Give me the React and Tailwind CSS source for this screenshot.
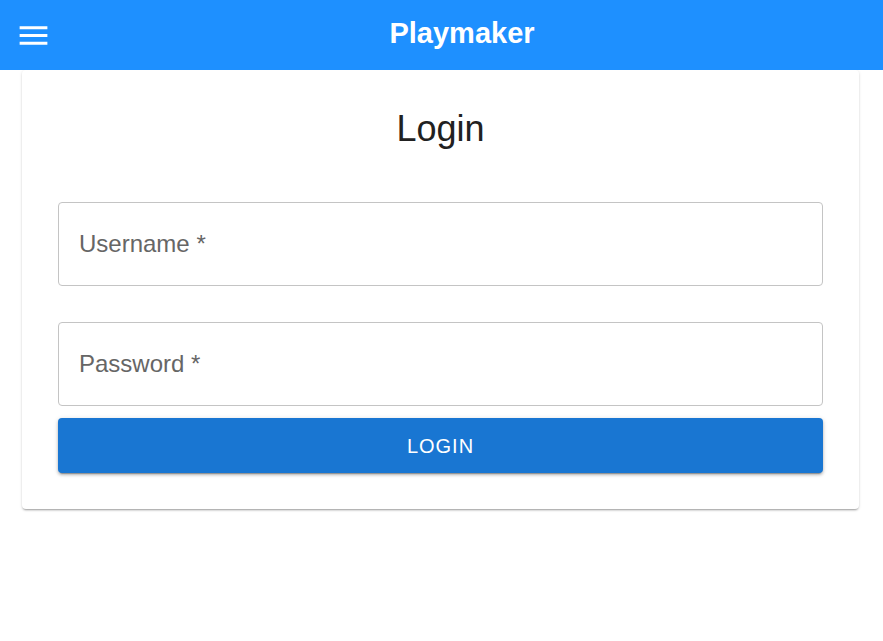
import React from "react";

const MenuIcon = () => (
  <svg viewBox="0 0 24 24" className="w-[37px] h-[37px] fill-white">
    <path d="M3 18h18v-2H3zm0-5h18v-2H3zm0-7v2h18V6z" />
  </svg>
);

export default function App() {
  return (
    <div className="min-h-screen bg-white font-['Liberation_Sans',Arial,sans-serif]">
      {/* App bar */}
      <header className="relative z-10 h-[70px] bg-[#1e90ff] flex items-center px-[15px]">
        <button className="flex items-center justify-center">
          <MenuIcon />
        </button>
        <h1 className="flex-1 text-center pl-[4px] -mt-[4px] text-[29px] font-bold text-white leading-none">
          Playmaker
        </h1>
      </header>

      {/* Login card */}
      <div className="ml-[22px] w-[837px] bg-white rounded-[4px] shadow-[0_2px_2px_-1px_rgba(0,0,0,0.3),0_1px_3px_0_rgba(0,0,0,0.15)] px-9 pt-[37px] pb-[36px]">
        <h2 className="text-center text-[36px] leading-[44px] text-[#212121]">Login</h2>

        <form className="mt-[51px] flex flex-col">
          <input
            type="text"
            placeholder="Username *"
            className="h-[84px] w-full rounded-[4px] border border-[#c4c4c4] pl-[20px] text-[24px] text-[#212121] placeholder:text-[#666666] outline-none"
          />
          <input
            type="password"
            placeholder="Password *"
            className="mt-[36px] h-[84px] w-full rounded-[4px] border border-[#c4c4c4] pl-[20px] text-[24px] text-[#212121] placeholder:text-[#666666] outline-none"
          />
          <button
            type="button"
            className="mt-[12px] h-[55px] w-full rounded-[4px] bg-[#1976d2] text-white text-[20px] tracking-[1px] uppercase shadow-[0_3px_1px_-2px_rgba(0,0,0,0.25),0_2px_3px_0_rgba(0,0,0,0.2),0_1px_5px_0_rgba(0,0,0,0.15)]"
          >
            Login
          </button>
        </form>
      </div>
    </div>
  );
}
